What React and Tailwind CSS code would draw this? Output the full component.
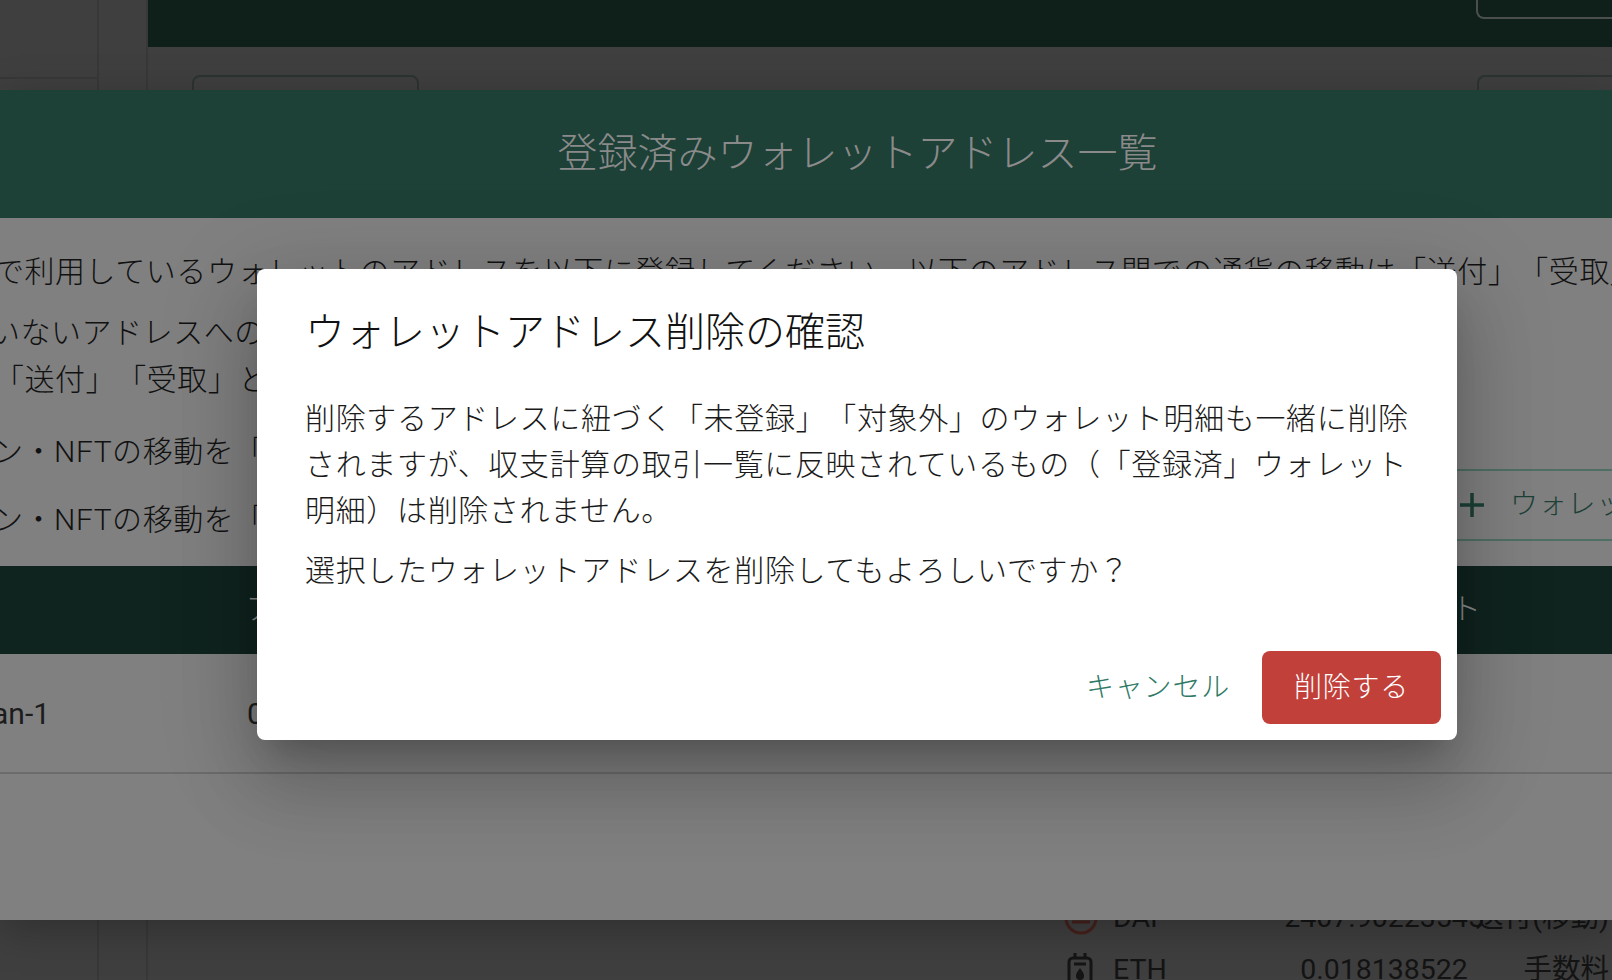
const font = "font-[Roboto,'Noto_Sans_CJK_JP',sans-serif] [text-spacing-trim:space-all]";

function DaiIcon() {
  return (
    <svg width="34" height="34" viewBox="0 0 34 34" fill="none" stroke="#46201c" strokeWidth="3">
      <circle cx="17" cy="17" r="15" />
      <path d="M8 21h18" />
    </svg>
  );
}

function FeeIcon() {
  return (
    <svg width="26" height="34" viewBox="0 0 26 34" fill="none" stroke="#151515" strokeWidth="3" className="ml-[3px]">
      <path d="M8 0v5M18 0v5" />
      <rect x="2" y="5" width="22" height="28" rx="4" />
      <path d="M7 11h12" />
      <path d="M13 15c-3 4-4 6-4 8a4 4 0 0 0 8 0c0-2-1-4-4-8z" fill="#151515" stroke="none" />
    </svg>
  );
}

function TokenRow({ icon, symbol, amount, type }) {
  return (
    <div className="flex h-[52px] items-center whitespace-nowrap">
      <div className="flex w-[49px] shrink-0">{icon}</div>
      <span className="w-[157px] shrink-0">{symbol}</span>
      <div className="flex w-[228px] shrink-0 justify-center">{amount}</div>
      <div className="flex w-[111px] shrink-0 justify-end">{type}</div>
    </div>
  );
}

function BackPage() {
  return (
    <div className="flex h-[980px] w-[1612px] bg-[#3f3f3f]">
      <div className="w-[99px] shrink-0 border-r-2 border-[#383838]">
        <div className="h-[79px] border-b-2 border-[#383838]" />
      </div>
      <div className="w-[49px] shrink-0 border-r-2 border-[#383838]" />
      <div className="flex min-w-0 flex-1 flex-col">
        <div className="flex h-[47px] shrink-0 justify-end bg-[#0f201a]">
          <div className="h-[19px] w-[136px] rounded-bl-lg border-b-2 border-l-2 border-[#4a4f4d]" />
        </div>
        <div className="mt-[28px] flex justify-between pl-[44px]">
          <div className="h-[60px] w-[227px] rounded-t-lg border-2 border-[#2c3431]" />
          <div className="h-[60px] w-[135px] rounded-tl-lg border-l-2 border-t-2 border-[#2c3431]" />
        </div>
        <div className="-mb-[16px] mt-auto pl-[916px] text-[28.5px] text-[#141414]">
          <TokenRow icon={<DaiIcon />} symbol="DAI" amount="2407.90223545" type="送付(移動)" />
          <TokenRow icon={<FeeIcon />} symbol="ETH" amount="0.018138522" type="手数料" />
        </div>
      </div>
    </div>
  );
}

function WalletPanel() {
  return (
    <div className="absolute inset-x-0 top-[90px] flex h-[830px] flex-col overflow-hidden bg-[#808080] shadow-[0_10px_40px_rgba(0,0,0,0.25)]">
      <div className="flex h-[128px] shrink-0 items-center justify-center bg-[#1d4037] pl-[103px] text-[40px] font-light text-[#8a8a8a]">
        登録済みウォレットアドレス一覧
      </div>
      <div className="relative h-[348px] shrink-0 whitespace-nowrap text-[30px] font-light leading-[46px] tracking-[0.54px] text-[#111]">
        <p className="-ml-[6px] mt-[31px]">で利用しているウォレットのアドレスを以下に登録してください。以下のアドレス間での通貨の移動は「送付」「受取」</p>
        <p className="-ml-[10px] mt-[15px]">いないアドレスへの通貨の移動は</p>
        <p className="-ml-[6px] mt-[1px]">「送付」「受取」と</p>
        <p className="-ml-[7px] mt-[26px]">ン・NFTの移動を「</p>
        <p className="-ml-[7px] mt-[22px]">ン・NFTの移動を「</p>
        <div className="absolute left-[1457px] top-[251px] flex h-[72px] w-[200px] items-center gap-[25px] border-y-2 border-[#4f6f64] pl-[2px] text-[28px] tracking-[0.8px] text-[#1d4037]">
          <svg width="26" height="26" viewBox="0 0 26 26" stroke="#1d4037" strokeWidth="3.5" className="shrink-0">
            <path d="M13 1v24M1 13h24" />
          </svg>
          <span>ウォレット</span>
        </div>
      </div>
      <div className="flex h-[88px] shrink-0 items-center justify-between bg-[#10241f] pb-[3px] pl-[246px] pr-[131px] text-[30px] font-light text-[#8a8a8a]">
        <span>アドレス</span>
        <span>ウォレット</span>
      </div>
      <div className="flex h-[120px] shrink-0 items-center border-b-2 border-[#6c6c6c] text-[30px] text-[#1c1c1c]">
        <span className="-ml-[8px] w-[255px]">an-1</span>
        <span>0x</span>
      </div>
    </div>
  );
}

function ConfirmDialog() {
  return (
    <div className="absolute left-[257px] top-[269px] flex h-[471px] w-[1200px] flex-col rounded-lg bg-white shadow-[0_22px_30px_-14px_rgba(0,0,0,0.2),0_48px_76px_6px_rgba(0,0,0,0.14),0_18px_92px_16px_rgba(0,0,0,0.12)]">
      <h2 className="px-[48px] pt-[32px] text-[40px] font-light leading-[64px] text-[#111]">
        ウォレットアドレス削除の確認
      </h2>
      <div className="px-[48px] pt-[31px] text-[30px] font-light leading-[46px] tracking-[0.66px] text-[#1a1a1a]">
        <p>削除するアドレスに紐づく「未登録」「対象外」のウォレット明細も一緒に削除されますが、収支計算の取引一覧に反映されているもの（「登録済」ウォレット明細）は削除されません。</p>
        <p className="mt-[14px]">選択したウォレットアドレスを削除してもよろしいですか？</p>
      </div>
      <div className="mt-auto flex items-center justify-end gap-[16px] p-[16px]">
        <button className="h-[73px] px-[16px] text-[28px] font-light tracking-[0.8px] text-[#2f7a66]">キャンセル</button>
        <button className="h-[73px] w-[179px] rounded-lg bg-[#c1403a] text-[28px] font-light tracking-[0.8px] text-white">削除する</button>
      </div>
    </div>
  );
}

export default function App() {
  return (
    <div className={`relative h-[980px] w-[1612px] overflow-hidden ${font}`}>
      <BackPage />
      <WalletPanel />
      <ConfirmDialog />
    </div>
  );
}
